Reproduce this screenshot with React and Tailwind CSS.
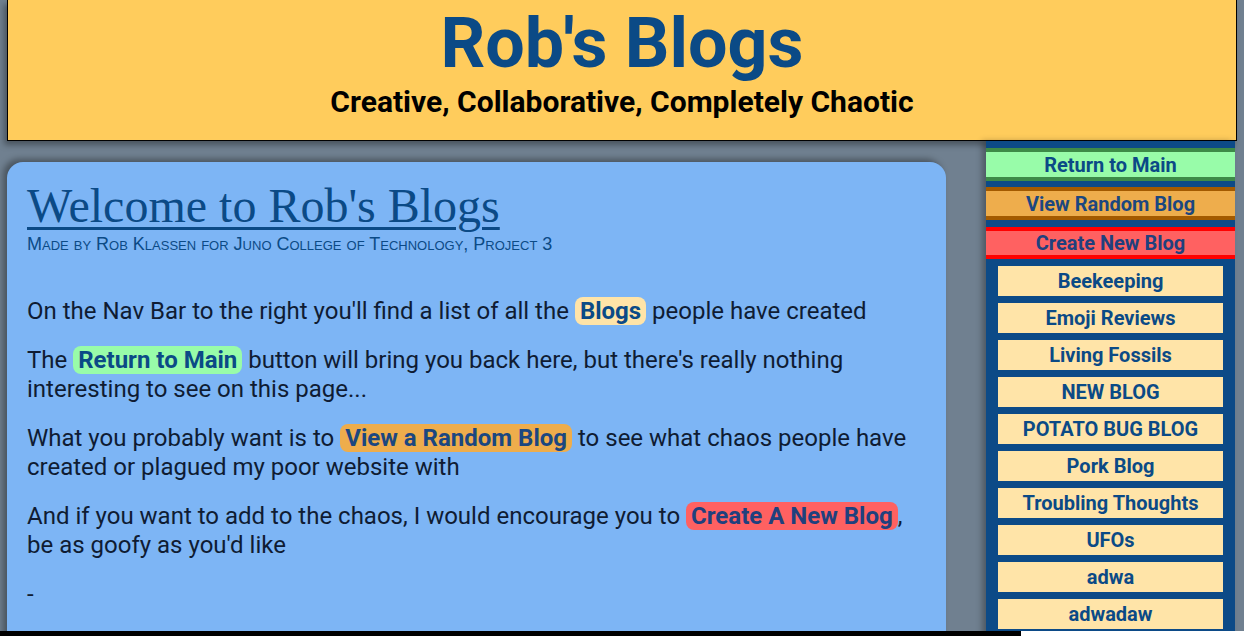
const blogs = [
  'Beekeeping',
  'Emoji Reviews',
  'Living Fossils',
  'NEW BLOG',
  'POTATO BUG BLOG',
  'Pork Blog',
  'Troubling Thoughts',
  'UFOs',
  'adwa',
  'adwadaw',
]

function Tag({ className, children }) {
  return (
    <span className={`inline-block leading-[28px] rounded-[8px] px-[5px] font-bold ${className}`}>{children}</span>
  )
}

export default function App() {
  return (
    <div className="h-[636px] overflow-hidden bg-[#708090] flex flex-col font-['Roboto',sans-serif]">
      <div className="flex-1 overflow-hidden">
        {/* Header */}
        <header className="mx-[7px] h-[141px] bg-[#ffcc5c] border border-black border-t-0 shadow-[-3px_4px_6px_rgba(0,0,0,0.35)] flex flex-col items-center">
          <h1 className="text-[70px] leading-none font-bold text-[#0b4a86] mt-[8px]">Rob's Blogs</h1>
          <p className="text-[30px] leading-[36px] font-bold text-black mt-[6px]">Creative, Collaborative, Completely Chaotic</p>
        </header>

        <div className="flex pl-[7px]">
          {/* Main card */}
          <main className="w-[939px] mt-[21px] bg-[#7db5f5] rounded-[16px] shadow-[-4px_-3px_6px_rgba(0,0,0,0.35)] px-[20px] pt-[18px] pb-[40px] text-[#0f1c33]">
            <h2 className="font-['Liberation_Serif',serif] text-[48px] leading-[1.1] text-[#0b4a86] underline decoration-[3px] underline-offset-[5px]">
              Welcome to Rob's Blogs
            </h2>
            <p className="font-['Liberation_Sans_Narrow','Liberation_Sans',sans-serif] [font-variant:small-caps] text-[18px] leading-[20px] text-[#0b4a86] mt-[1px]">
              Made by Rob Klassen for Juno College of Technology, Project 3
            </p>

            <div className="text-[24px] leading-[29px] mt-[43px] flex flex-col gap-[20px]">
              <p>
                On the Nav Bar to the right you'll find a list of all the{' '}
                <Tag className="bg-[#ffe4a8] text-[#0b4a86]">Blogs</Tag> people have created
              </p>
              <p>
                The <Tag className="bg-[#98fca9] text-[#0b4a86]">Return to Main</Tag> button will bring you back here, but there's really nothing interesting to see on this page...
              </p>
              <p>
                What you probably want is to{' '}
                <Tag className="bg-[#eead4c] text-[#1b4780]">View a Random Blog</Tag> to see what chaos people have created or plagued my poor website with
              </p>
              <p>
                And if you want to add to the chaos, I would encourage you to{' '}
                <Tag className="bg-[#ff6161] text-[#20407e]">Create A New Blog</Tag>, be as goofy as you'd like
              </p>
              <p>-</p>
            </div>
          </main>

          {/* Nav */}
          <nav className="ml-[40px] w-[249px] bg-[#0c4a87] pt-[7px] pb-[40px] shadow-[-4px_0_6px_rgba(0,0,0,0.3)] flex flex-col">
            <button className="h-[33px] bg-[#98fca9] border-y-4 border-[#3d8b48] text-[20px] font-bold text-[#0b4a86] leading-none">
              Return to Main
            </button>
            <button className="mt-[6px] h-[33px] bg-[#eead4c] border-y-4 border-[#a35a00] text-[20px] font-bold text-[#1b4780] leading-none">
              View Random Blog
            </button>
            <button className="mt-[7px] h-[32px] bg-[#ff6161] border-y-4 border-[#ff0000] text-[20px] font-bold text-[#20407e] leading-none">
              Create New Blog
            </button>
            <ul className="mt-[7px] px-[12px] flex flex-col gap-[7px]">
              {blogs.map((b) => (
                <li
                  key={b}
                  className="h-[30px] bg-[#ffe4a8] flex items-center justify-center text-[20px] font-bold text-[#0b4a86]"
                >
                  {b}
                </li>
              ))}
            </ul>
          </nav>
        </div>
      </div>

      {/* bottom strip */}
      <div className="h-[5px] flex shrink-0">
        <div className="w-[1021px] bg-black" />
        <div className="flex-1 bg-white" />
      </div>
    </div>
  )
}
